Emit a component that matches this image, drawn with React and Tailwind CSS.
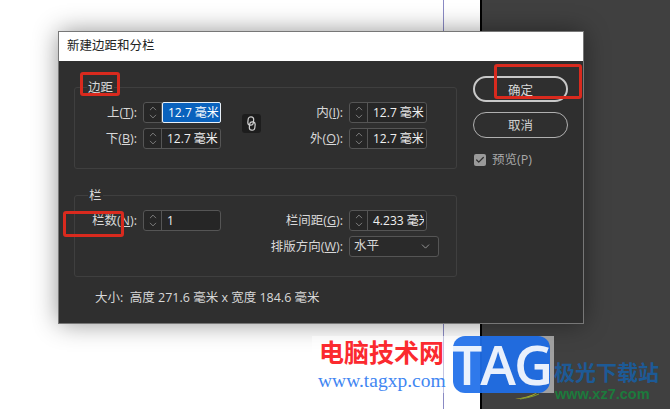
import React from 'react';
import { Check, ChevronDown, ChevronUp } from 'lucide-react';

const uiFont = "font-['Open_Sans','Noto_Sans_CJK_SC',sans-serif]";

// Label with the underlined mnemonic letter
const FieldLabel = ({ text, hotkey, width }) => (
  <div className={`${width} shrink-0 pr-[6px] text-right text-[12.5px] leading-[21px] text-[#d8d8d8] whitespace-nowrap`}>
    {text}(<span className="underline">{hotkey}</span>):
  </div>
);

const Stepper = () => (
  <div className="w-[18px] shrink-0 flex flex-col items-center justify-center border-r border-[#555555] text-[#d0d0d0]">
    <ChevronUp size={14} strokeWidth={1.1} className="-mb-[1.5px]" />
    <ChevronDown size={14} strokeWidth={1.1} className="-mt-[1.5px]" />
  </div>
);

const NumberField = ({ value, selected, clip }) => (
  <div className="w-[78px] h-[21px] shrink-0 flex rounded-[3px] border border-[#555555] bg-[#262626]">
    <Stepper />
    {selected ? (
      <div className="flex-1 flex items-center pl-[5px] -my-px -mr-px rounded-[2px] border border-[#e8f0f8] bg-[#0a62bd] text-[12px] text-white whitespace-nowrap overflow-hidden">
        {value}
      </div>
    ) : (
      <div className={`flex-1 flex items-center pl-[5px] text-[12px] text-[#f0f0f0] whitespace-nowrap overflow-hidden ${clip ? 'mr-[2px]' : ''}`}>
        {value}
      </div>
    )}
  </div>
);

const GroupBox = ({ title, children, labelLeft }) => (
  <div className="relative w-[383px] h-[82px] rounded-[3px] border border-[#3f3f3f] pt-[14px]">
    <div className={`absolute -top-[9px] ${labelLeft} px-[1px] bg-[#2f2f2f] text-[12.5px] leading-[17px] text-[#d8d8d8]`}>
      {title}
    </div>
    {children}
  </div>
);

const Row = ({ children }) => <div className="flex h-[21px] mb-[5px]">{children}</div>;

const ChainIcon = () => (
  <svg width="9" height="15" viewBox="0 0 9 15" fill="none" stroke="#cfcfcf" strokeWidth="1.2">
    <rect x="1" y="0.8" width="5.5" height="8.4" rx="2.75" transform="rotate(6 4 5)" />
    <rect x="2.5" y="5.8" width="5.5" height="8.4" rx="2.75" transform="rotate(6 5 10)" />
  </svg>
);

const App = () => {
  return (
    <div className={`relative w-[670px] h-[409px] flex overflow-hidden ${uiFont}`}>
      {/* document page and the dark pasteboard behind the dialog */}
      <div className="relative w-[482px] shrink-0 h-full bg-white border-r-2 border-black">
        <div className="absolute left-[443px] top-0 bottom-0 w-px bg-[#8a8ac4]" />
      </div>
      <div className="flex-1 bg-[#404040]" />

      {/* dialog */}
      <div className="absolute left-[59px] top-[32px] w-[524px] h-[291px] flex flex-col bg-[#2f2f2f] shadow-[0_0_24px_rgba(0,0,0,0.45)] outline outline-1 outline-[#777777]">
        <div className="h-[29px] shrink-0 flex items-center pl-[8px] bg-white text-[12.5px] text-[#222222]">
          新建边距和分栏
        </div>

        <div className="flex flex-1 pl-[15px] pt-[26px]">
          <div className="flex flex-col">
            <GroupBox title="边距" labelLeft="left-[12px]">
              <div className="flex">
                <div>
                  <Row>
                    <FieldLabel text="上" hotkey="T" width="w-[68px]" />
                    <NumberField value="12.7 毫米" selected />
                  </Row>
                  <Row>
                    <FieldLabel text="下" hotkey="B" width="w-[68px]" />
                    <NumberField value="12.7 毫米" />
                  </Row>
                </div>
                <div className="ml-[21px] mt-[12px] w-[19px] h-[19px] flex items-center justify-center rounded-[3px] bg-[#1d1d1d]">
                  <ChainIcon />
                </div>
                <div className="ml-[1px]">
                  <Row>
                    <FieldLabel text="内" hotkey="I" width="w-[87px]" />
                    <NumberField value="12.7 毫米" />
                  </Row>
                  <Row>
                    <FieldLabel text="外" hotkey="O" width="w-[87px]" />
                    <NumberField value="12.7 毫米" />
                  </Row>
                </div>
              </div>
            </GroupBox>

            <div className="mt-[26px]">
              <GroupBox title="栏" labelLeft="left-[13px]">
                <div className="flex">
                  <div>
                    <Row>
                      <FieldLabel text="栏数" hotkey="N" width="w-[68px]" />
                      <NumberField value="1" />
                    </Row>
                  </div>
                  <div className="ml-[41px]">
                    <Row>
                      <FieldLabel text="栏间距" hotkey="G" width="w-[87px]" />
                      <NumberField value="4.233 毫米" clip />
                    </Row>
                    <Row>
                      <FieldLabel text="排版方向" hotkey="W" width="w-[87px]" />
                      <div className="w-[90px] h-[21px] flex items-center justify-between pl-[4px] pr-[6px] rounded-[3px] border border-[#555555] bg-[#2a2a2a] text-[12.5px] text-[#d8d8d8]">
                        水平
                        <ChevronDown size={13} strokeWidth={1.1} />
                      </div>
                    </Row>
                  </div>
                </div>
              </GroupBox>
            </div>

            <div className="mt-[12px] pl-[21px] text-[12.5px] leading-[18px] text-[#d8d8d8] whitespace-pre">
              大小:  高度 271.6 毫米 x 宽度 184.6 毫米
            </div>
          </div>

          <div className="ml-[16px] -mt-[11px] w-[95px] flex flex-col">
            <button className="h-[26px] pt-[3px] rounded-full border-2 border-[#c8c8c8] text-[12.5px] leading-[18px] text-[#d8d8d8]">确定</button>
            <button className="mt-[10px] h-[26px] pt-[2px] rounded-full border border-[#b0b0b0] text-[12.5px] leading-[18px] text-[#d0d0d0]">取消</button>
            <div className="mt-[13px] flex items-center text-[12.5px] text-[#a8a8a8]">
              <div className="w-[12px] h-[12px] mx-[1px] flex items-center justify-center rounded-[2px] bg-[#9a9a9a] text-[#2f2f2f]">
                <Check size={10} strokeWidth={3} />
              </div>
              <span className="ml-[5px]">预览(P)</span>
            </div>
          </div>
        </div>
      </div>

      {/* red annotation boxes */}
      <div className="absolute left-[80px] top-[72px] w-[40px] h-[24px] rounded-[3px] border-[3px] border-[#d92a1e]" />
      <div className="absolute left-[494px] top-[64px] w-[88px] h-[35px] rounded-[3px] border-[3px] border-[#d92a1e]" />
      <div className="absolute left-[63px] top-[211px] w-[61px] h-[26px] rounded-[3px] border-[3px] border-[#d92a1e]" />

      {/* watermarks */}
      <div className="absolute left-[312px] top-[336px] w-[242px] h-[57px] bg-white/50" />
      <div className="absolute left-[319px] top-[336px] text-[25px] leading-[30px] font-bold text-[#fb2a2f] whitespace-nowrap font-['Noto_Sans_CJK_SC',sans-serif]">
        电脑技术网
      </div>
      <div className="absolute left-[318px] top-[371px] text-[19.5px] leading-[20px] text-[#3f86f2] whitespace-nowrap font-['Liberation_Serif',serif]">
        www.tagxp.com
      </div>
      <svg className="absolute left-[514px] top-[391px]" width="26" height="9" viewBox="0 0 26 9" fill="none">
        <path d="M1 8C8 7 16 5 24 1C19 6 10 8 1 8Z" fill="#a8a828" />
        <path d="M6 8C12 7 18 6 25 3" stroke="#7f9a30" strokeWidth="1" />
      </svg>
      <div className="absolute left-[453px] top-[336px] w-[97px] h-[57px] flex items-center justify-center rounded-[12px] bg-[#0a62e8]/85 text-[54px] font-semibold tracking-[-2px] text-white/90 font-['Open_Sans',sans-serif]">
        TAG
      </div>
      <div className="absolute left-[554px] top-[358px] text-[21px] leading-[26px] font-bold text-[#1d5a96] whitespace-nowrap font-['Noto_Sans_CJK_SC',sans-serif]">
        极光下载站
      </div>
      <div className="absolute left-[555px] top-[385px] text-[14.5px] leading-[18px] font-bold text-[#1c7a3c] whitespace-nowrap font-['Liberation_Sans',sans-serif]">
        www.xz7.com
      </div>
    </div>
  );
};

export default App;
